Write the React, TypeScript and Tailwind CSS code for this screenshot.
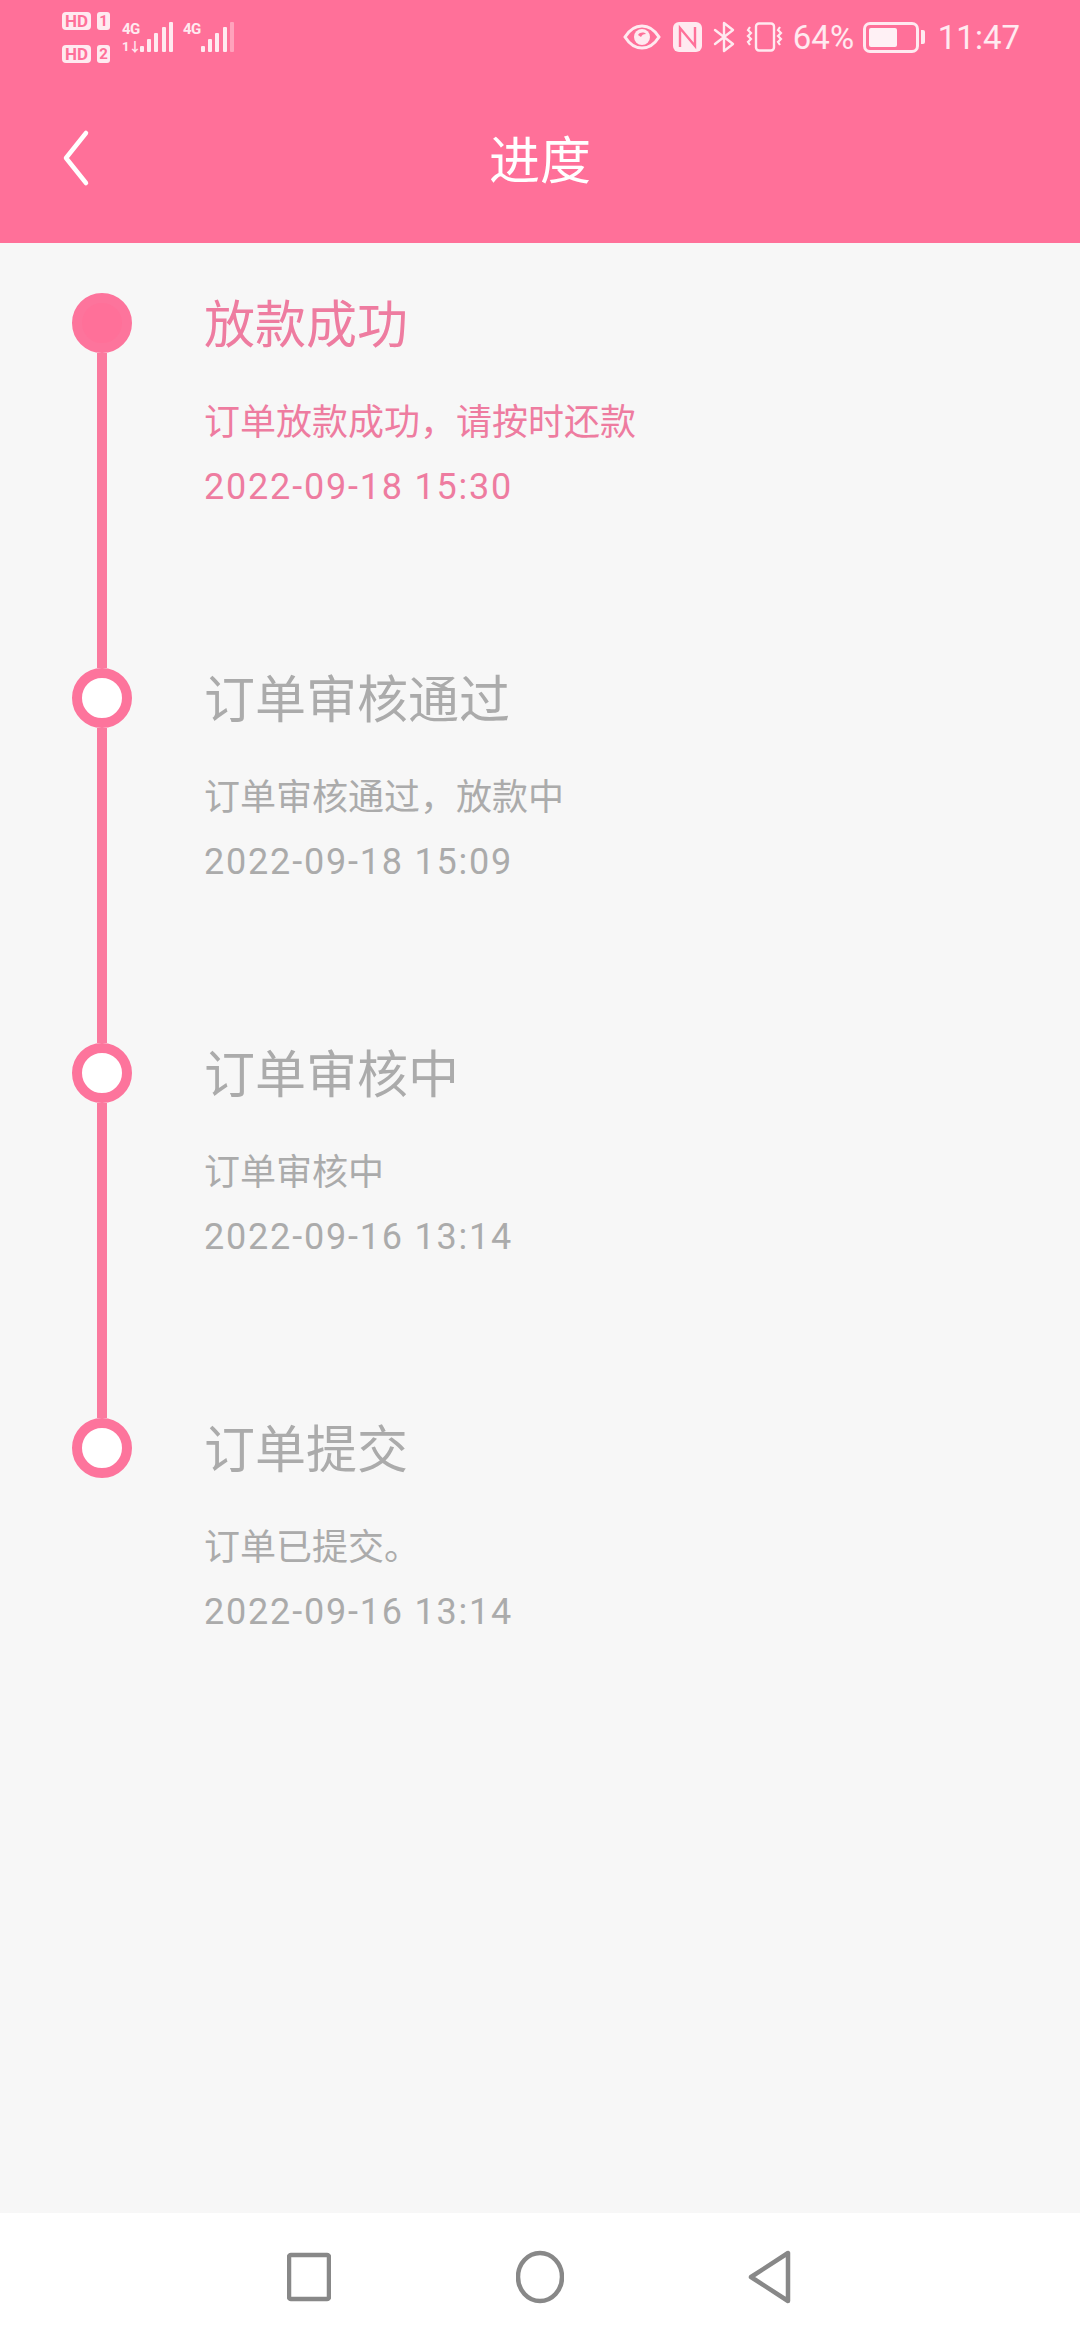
import React from 'react';

const FONT = 'font-["Roboto","Noto_Sans_CJK_SC",sans-serif]';

interface Step {
  title: string;
  desc: string;
  time: string;
  active?: boolean;
}

const steps: Step[] = [
  { title: '放款成功', desc: '订单放款成功，请按时还款', time: '2022-09-18 15:30', active: true },
  { title: '订单审核通过', desc: '订单审核通过，放款中', time: '2022-09-18 15:09' },
  { title: '订单审核中', desc: '订单审核中', time: '2022-09-16 13:14' },
  { title: '订单提交', desc: '订单已提交。', time: '2022-09-16 13:14' },
];

function SimBadge({ n }: { n: string }) {
  return (
    <div className="flex gap-[6px] h-[18px]">
      <span className="w-[29px] h-[18px] rounded-[4px] bg-white/85 text-[#ff7099] text-[17px] leading-[18px] font-bold text-center">HD</span>
      <span className="w-[13px] h-[18px] rounded-[3px] bg-white/85 text-[#ff7099] text-[15px] leading-[18px] font-bold text-center">{n}</span>
    </div>
  );
}

function Signal({ faded, arrows }: { faded?: boolean; arrows?: boolean }) {
  const bars = [
    { x: 1, y: 24 },
    { x: 8, y: 17 },
    { x: 15, y: 11 },
    { x: 23, y: 5 },
    { x: 30, y: 0 },
  ];
  return (
    <div className="flex">
      <div className="w-[17px] flex flex-col h-[30px] mt-[22px] text-white/85 font-bold">
        <span className="text-[15px] leading-[14px] tracking-[-0.5px] whitespace-nowrap">4G</span>
        {arrows && <span className="text-[13px] leading-[12px] mt-[5px] tracking-[-1px] whitespace-nowrap">1↓</span>}
      </div>
      <svg width="35" height="30" viewBox="0 0 35 30" className="mt-[22px]">
        {bars.map((b, i) => (
          <rect
            key={i}
            x={b.x}
            y={b.y}
            width="4"
            height={30 - b.y}
            rx="1"
            fill="#fff"
            fillOpacity={faded && i === 4 ? 0.35 : 0.85}
          />
        ))}
      </svg>
    </div>
  );
}

function StatusBar() {
  return (
    <div className={`${FONT} h-[74px] pl-[62px] pr-[60px] flex justify-between text-white/85`}>
      <div className="flex">
        <div className="flex flex-col gap-[15px] pt-[12px] w-[60px]">
          <SimBadge n="1" />
          <SimBadge n="2" />
        </div>
        <Signal arrows />
        <div className="w-[9px]" />
        <Signal faded />
      </div>
      <div className="flex items-center h-[74px]">
        {/* eye */}
        <svg width="38" height="26" viewBox="0 0 38 26" className="mr-[12px]">
          <path d="M2 13C7 5 13 2 19 2s12 3 17 11c-5 8-11 11-17 11S7 21 2 13z" fill="none" stroke="#fff" strokeOpacity="0.85" strokeWidth="3" />
          <circle cx="19" cy="13" r="8" fill="#fff" fillOpacity="0.85" />
          <path d="M15 11c2-3 6-3 8-1-3 0-4 1-5 3z" fill="#ff7099" />
        </svg>
        {/* nfc */}
        <svg width="29" height="30" viewBox="0 0 29 30" className="mr-[11px]">
          <rect width="29" height="30" rx="6" fill="#fff" fillOpacity="0.85" />
          <path d="M7 25V6l15 18V5" fill="none" stroke="#ff7099" strokeWidth="2.4" />
        </svg>
        {/* bluetooth */}
        <svg width="22" height="32" viewBox="0 0 22 32" className="mr-[11px]">
          <path d="M2 9l18 14-9 7V2l9 7L2 23" fill="none" stroke="#fff" strokeOpacity="0.85" strokeWidth="2.4" strokeLinejoin="round" strokeLinecap="round" />
        </svg>
        {/* vibrate */}
        <svg width="38" height="30" viewBox="0 0 38 30" className="mr-[9px]">
          <rect x="10" y="1.5" width="18" height="27" rx="3" fill="none" stroke="#fff" strokeOpacity="0.85" strokeWidth="2.4" />
          <path d="M4 5l-2 3 3 3-3 3 3 3-3 3 2 3" fill="none" stroke="#fff" strokeOpacity="0.85" strokeWidth="2.2" />
          <path d="M34 5l-2 3 3 3-3 3 3 3-3 3 2 3" fill="none" stroke="#fff" strokeOpacity="0.85" strokeWidth="2.2" />
        </svg>
        <span className="text-[33px] leading-none w-[61px] mr-[9px] whitespace-nowrap">64%</span>
        {/* battery */}
        <div className="flex items-center mr-[13px]">
          <div className="w-[56px] h-[31px] rounded-[7px] border-[3px] border-white/85 p-[3px]">
            <div className="h-full w-[64%] rounded-[2px] bg-white/90" />
          </div>
          <div className="w-[4px] h-[14px] ml-[2px] rounded-r-[2px] bg-white/85" />
        </div>
        <span className="text-[33px] leading-none whitespace-nowrap">11:47</span>
      </div>
    </div>
  );
}

function TopBar() {
  return (
    <div className="bg-[#ff7099] h-[243px] flex flex-col">
      <StatusBar />
      <div className="relative flex items-center justify-center h-[98px] mt-[38px]">
        <svg width="30" height="60" viewBox="0 0 30 60" className="absolute left-[60px] top-[17px]">
          <path d="M26 4L6 29l20 25" fill="none" stroke="#fff" strokeWidth="4.5" strokeLinecap="round" strokeLinejoin="round" />
        </svg>
        <span className={`${FONT} text-white text-[51px] leading-none`}>进度</span>
      </div>
    </div>
  );
}

function TimelineItem({ step, last }: { step: Step; last: boolean }) {
  return (
    <div className="flex h-[375px]">
      <div className="w-[60px] flex flex-col items-center shrink-0">
        <div className={`w-[60px] h-[60px] rounded-full border-[10px] border-[#fd749c] shrink-0 ${step.active ? 'bg-[#ff7099]' : 'bg-white'}`} />
        {!last && <div className="w-[10px] flex-1 bg-[#fb7a9f]" />}
      </div>
      <div className={`ml-[72px] ${FONT} ${step.active ? 'text-[#ee7ca0]' : 'text-[#ababab]'}`}>
        <div className="text-[51px] leading-[60px] pt-[3px] h-[63px]">{step.title}</div>
        <div className="text-[36px] leading-[44px] mt-[45px]">{step.desc}</div>
        <div className="text-[36px] leading-[44px] mt-[20px] tracking-[1.8px]">{step.time}</div>
      </div>
    </div>
  );
}

function NavBar() {
  return (
    <div className="bg-white h-[127px] flex items-center justify-between pl-[287px] pr-[288px]">
      <svg width="44" height="50" viewBox="0 0 44 50">
        <rect x="2" y="3" width="40" height="44" rx="2" fill="none" stroke="#888" strokeWidth="4.5" />
      </svg>
      <svg width="48" height="54" viewBox="0 0 48 54">
        <ellipse cx="24" cy="27" rx="22" ry="24" fill="none" stroke="#888" strokeWidth="4.5" />
      </svg>
      <svg width="44" height="54" viewBox="0 0 44 54">
        <path d="M3 27L40 3v48z" fill="none" stroke="#888" strokeWidth="4.5" strokeLinejoin="round" />
      </svg>
    </div>
  );
}

export default function App() {
  return (
    <div className="w-[1080px] h-[2340px] flex flex-col bg-[#f7f7f7]">
      <TopBar />
      <div className="flex-1 pt-[50px] pl-[72px]">
        {steps.map((step, i) => (
          <TimelineItem key={i} step={step} last={i === steps.length - 1} />
        ))}
      </div>
      <NavBar />
    </div>
  );
}
